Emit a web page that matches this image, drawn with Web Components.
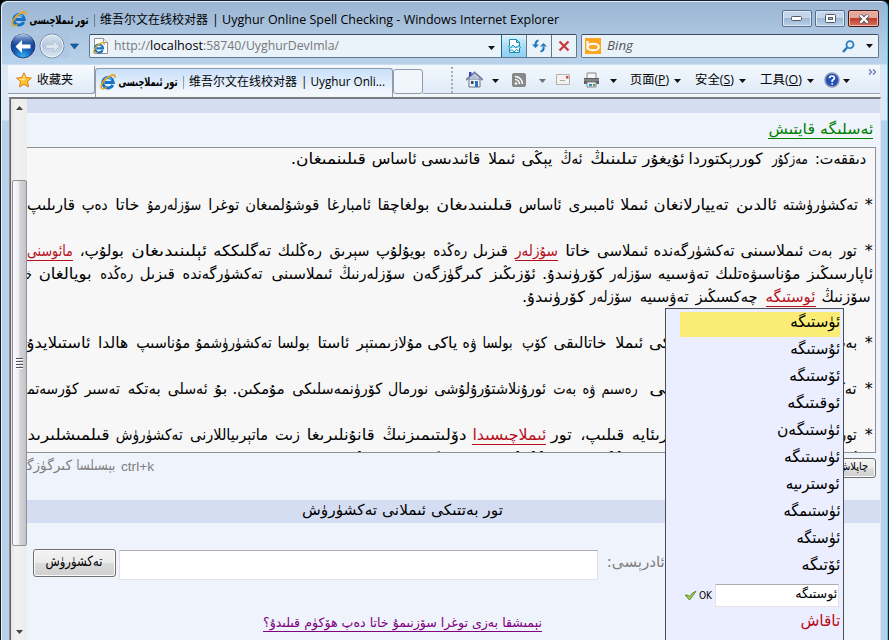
<!DOCTYPE html>
<html lang="ug">
<head>
<meta charset="utf-8">
<title>تور ئىملاچىسى</title>
<style>
html,body{margin:0;height:640px;overflow:hidden;background:#000}
</style>
</head>
<body>
<ie-window></ie-window>
<script>
const define=(n,c)=>customElements.define(n,c);
const mount=(el,html)=>{el.attachShadow({mode:'open'}).innerHTML=html;};

/* Text run that fills a given width; rtl runs are anchored right. */
define('fit-text',class extends HTMLElement{
  connectedCallback(){
    if(this.shadowRoot)return;
    const a=n=>this.getAttribute(n),w=+a('w'),rtl=this.hasAttribute('rtl'),u=a('u');
    mount(this,`<style>:host{display:block;flex:none;width:${w}px;white-space:nowrap;direction:${rtl?'rtl':'ltr'};
      ${u?`background:linear-gradient(currentColor,currentColor) 0 ${u}px/100% 1px no-repeat;`:''}}
      span{display:inline-block;transform-origin:${rtl?'right':'left'} center}</style><span><slot></slot></span>`);
    const s=this.shadowRoot.querySelector('span'),n=s.getBoundingClientRect().width;
    if(n)s.style.transform=`scaleX(${w/n})`;
  }
});

/* One right-to-left line. Each run is [right, left, text, underlined]. */
const run=(list,edge,under)=>{let x=edge;return list.map(([r,l,t,red])=>{
  const m=x-r;x=l;
  return `<fit-text rtl w="${r-l}" style="margin-right:${m}px${red?';color:#b8101c':''}" ${red?`u="${under}"`:''}>${t}</fit-text>`;}).join('');};

const J='\u200D';
const LINES=[
 [[866,815,'دىققەت:'],[808,772,'مەزكۇر'],[763,689,'كوررېكتوردا'],[685,643,'ئۇيغۇر'],[637,590,'تىلىنىڭ'],[582,560,'ئەڭ'],[552,521,'يېڭى'],[515,488,'ئىملا'],[480,421,'قائىدىسى'],[417,372,'ئاساس'],[366,291,'قىلىنمىغان.']],
 [],
 [[873,865,'*'],[858,783,'تەكشۈرۈشتە'],[777,736,'ئالدىن'],[729,654,'تەييارلانغان'],[648,620,'ئىملا'],[614,568,'ئامبىرى'],[562,519,'ئاساس'],[512,436,'قىلىنىدىغان'],[429,377,'بولغاچقا'],[371,327,'ئامبارغا'],[319,245,'قوشۇلمىغان'],[239,208,'توغرا'],[201,147,'سۆزلەرمۇ'],[139,115,'خاتا'],[108,82,'دەپ'],[75,27,'قارىلىپ']],
 [],
 [[873,865,'*'],[857,840,'تور'],[832,808,'بەت'],[803,740,'ئىملاسىنى'],[735,654,'تەكشۈرگەندە'],[648,597,'ئىملاسى'],[590,565,'خاتا'],[558,515,'سۇزلەر',1],[508,473,'قىزىل'],[467,433,'رەڭدە'],[426,376,'بويۇلۇپ'],[369,329,'سېرىق'],[322,278,'رەڭلىك'],[271,213,'تەگلىككە'],[207,131,'ئېلىنىدىغان'],[124,80,'بولۇپ،'],[73,27,'مائوسنى',1]],
 [[873,807,'ئاپارسىڭىز'],[800,715,'مۇناسىۋەتلىك'],[709,658,'تەۋسىيە'],[652,610,'سۆزلەر'],[604,542,'كۆرۈنىدۇ.'],[536,490,'ئۆزىڭىز'],[483,413,'كىرگۈزگەن'],[405,339,'سۆزلەرنىڭ'],[332,271,'ئىملاسىنى'],[263,183,'تەكشۈرگەندە'],[175,140,'قىزىل'],[133,100,'رەڭدە'],[92,39,'بويالغان'],[32,27,'خ'+J]],
 [[871,822,'سۆزنىڭ'],[816,766,'ئوستىگە',1],[758,696,'چەكسىڭىز'],[689,640,'تەۋسىيە'],[632,590,'سۆزلەر'],[585,522,'كۆرۈنىدۇ.']],
 [],
 [[873,865,'*'],[857,832,'بەت'],[826,649,'تېكىستىدىكى سۆزلەردىكى'],[643,615,'ئىملا'],[607,554,'خاتالىقى'],[547,522,'كۆپ'],[513,483,'بولسا'],[477,463,'ۋە'],[457,427,'ياكى'],[422,356,'مۇلازىمىتېر'],[349,317,'ئاستا'],[310,278,'بولسا'],[272,196,'تەكشۈرۈشمۇ'],[190,136,'مۇناسىپ'],[128,98,'ھالدا'],[91,27,'ئاستىلايدۇ']],
 [],
 [[873,865,'*'],[857,777,'تەكشۈرگەندە'],[770,649,'تور بەتلەردىكى'],[638,602,'رەسىم'],[596,583,'ۋە'],[576,553,'بەت'],[546,434,'ئورۇنلاشتۇرۇلۇشى'],[428,388,'نورمال'],[382,292,'كۆرۈنمەسلىكى'],[285,233,'مۇمكىن.'],[227,214,'بۇ'],[208,168,'ئەسلى'],[161,128,'بەتكە'],[120,85,'تەسىر'],[78,27,'كۆرسەتم'+J]],
 [],
 [[873,865,'*'],[857,840,'تور'],[832,672,'بەت قانۇنلىرىغا'],[668,632,'رىئايە'],[624,580,'قىلىپ،'],[572,551,'تور'],[546,472,'ئىملاچىسىدا',1],[466,382,'دۆلىتىمىزنىڭ'],[375,307,'قانۇنلىرىغا'],[300,275,'زىت'],[268,190,'ماتېرىياللارنى'],[183,116,'تەكشۈرۈش'],[109,27,'قىلمىشلىرىد'+J]],
 [[873,760,'ساقلىنىشىڭىزنى'],[753,640,'ئۈمىد قىلىمىز'],[632,470,'ئالدىن ئالالايدۇ'],[462,320,'تەكشۈرۈلىدۇ']]
];

define('ie-arrow',class extends HTMLElement{connectedCallback(){
  mount(this,`<style>:host{display:block;flex:none;width:7px;height:4px}svg{display:block}</style><svg width="7" height="4"><path d="M0 0h7L3.500 4z" fill="${this.getAttribute('c')||'#111'}"/></svg>`);}});

define('ie-logo',class extends HTMLElement{connectedCallback(){
  mount(this,`<style>:host{display:block;flex:none;width:16px;height:16px}svg{display:block}</style>
  <svg width="16" height="16" viewBox="0 0 16 16"><path d="M12.800 11A5.300 5.300 0 1 1 13.300 8.500H4.600" fill="none" stroke="#1473c8" stroke-width="3"/><path d="M11.500 5.400A4 4 0 0 0 4.300 6.500" fill="none" stroke="#55c1f3" stroke-width="1.200"/><path d="M1.600 14.600C-.5 11.500 4.500 4.500 10 1.900C13.500.2 15.700.8 14.700 3.800" fill="none" stroke="#e9a317" stroke-width="1.700"/><path d="M1.600 14.600C3 15.600 5 14.400 6.500 13.400" fill="none" stroke="#e9a317" stroke-width="1.300"/></svg>`);}});

const ICON={
 back:[96,32,`<defs><radialGradient id="b" cx=".5" cy=".95" r=".8"><stop offset="0" stop-color="#35b6f2"/><stop offset=".5" stop-color="#1457b4"/><stop offset="1" stop-color="#0d2f7c"/></radialGradient><linearGradient id="t" x2="0" y2="1"><stop offset="0" stop-color="#b9cff0"/><stop offset="1" stop-color="#4d7dc6" stop-opacity="0"/></linearGradient><linearGradient id="f" x2="0" y2="1"><stop offset="0" stop-color="#dbe6f2"/><stop offset=".5" stop-color="#b4c8de"/><stop offset="1" stop-color="#dfeaf5"/></linearGradient></defs>
  <path d="M14 3Q32 8 44 3H62V28H44Q32 24 14 29Z" fill="#a5bdd9" opacity=".35"/><circle cx="15" cy="16" r="12.500" fill="url(#b)" stroke="#e3edf8" stroke-width="1"/><circle cx="15" cy="16" r="12" fill="none" stroke="#263b69"/><path d="M4 15A11 11 0 0 1 26 15Q15 18 4 15" fill="url(#t)"/><path d="M7.500 16.500L14 10v4.500h8.500v4H14V23z" fill="#fff"/><circle cx="44" cy="16" r="12" fill="url(#f)" stroke="#758ba6"/><circle cx="44" cy="16" r="11" fill="none" stroke="#eef5fb"/><path d="M51.500 16.500L45.500 10.500v4H38v4h7.500v4z" fill="#dce6ef" stroke="#aabed3" stroke-width=".7"/><path d="M62.500 14h8l-4 5z" fill="#0b64ad" stroke="#174a7c" stroke-width=".7"/>`],
 page:[16,16,`<path d="M1.500.5h9l4 4v11h-13z" fill="#fff" stroke="#8c8f94"/><path d="M10.500.5v4h4" fill="#eee" stroke="#999"/>`],
 compat:[15,16,`<path d="M2.500 8V1.500h7l3 3V8M9.500 1.500v3h3M2.500 10v4.500h10V10" fill="#fff" stroke="#1a8ab5"/><path d="M1 8l2.500 2L6 7l3 3 2-2.500L14 10M3 13l2-1.500L7 14l2.500-2.500L12 13" fill="none" stroke="#1a9bc7"/>`],
 refresh:[15,15,`<path d="M6.500 1.500Q3.500 2 3.500 6M8.500 12.500Q12 12 11.500 8" fill="none" stroke="#2277bb" stroke-width="2.200"/><path d="M0 5.500h7L3.500 9zM8 7.500h7L11.500 4z" fill="#2277bb"/>`],
 stop:[12,12,`<path d="M1.500 1.500l9 9M10.500 1.500l-9 9" stroke="#c83c3c" stroke-width="2.300"/>`],
 bing:[16,16,`<path d="M0 0h16v16H0z" fill="#ffa51f"/><path d="M2.500 3v8.500" stroke="#fff" stroke-width="2"/><ellipse cx="8.200" cy="9" rx="5.600" ry="3.300" fill="none" stroke="#fff" stroke-width="2"/>`],
 search:[13,13,`<path d="M1 12l4.500-5" stroke="#2673b7" stroke-width="2.300"/><circle cx="8" cy="4.700" r="3.500" fill="#dbf0ff" stroke="#3080bf" stroke-width="1.800"/>`],
 star:[16,16,`<path d="M8 .8l2.200 4.700 5.200.6-3.900 3.500 1 5.300L8 12.300l-4.500 2.600 1-5.300L.6 6.100l5.200-.6z" fill="#ffc233" stroke="#d87d10"/><path d="M8 3v5L3 7" fill="none" stroke="#ffe9a0"/>`],
 home:[17,17,`<path d="M3 8h11v8H3z" fill="#eff1f5" stroke="#66708a"/><path d="M0 9L8.500 1.500 17 9" fill="none" stroke="#76809f" stroke-width="2"/><path d="M3 1h2.500v3L3 6z" fill="#3443c9"/><path d="M8 3.500L13 8H4z" fill="#b4bfd8"/><path d="M9 10h3v6H9z" fill="#2e72c6"/><path d="M5 10h2.500v3H5z" fill="#39445e"/>`],
 rss:[14,14,`<rect width="14" height="14" rx="2" fill="#888"/><circle cx="4" cy="10.500" r="1.300" fill="#fff"/><path d="M3 6.500A4.500 4.500 0 0 1 7.500 11M3 3.500A7.500 7.500 0 0 1 10.500 11" fill="none" stroke="#fff" stroke-width="1.500"/>`],
 mail:[15,11,`<path d="M.5.500h13v10H.5z" fill="#f4f2f1" stroke="#b8afae"/><path d="M10 2h2.500v2.500H10z" fill="#d54444"/><path d="M4 6.500h5" stroke="#aaa"/>`],
 print:[17,16,`<path d="M4 1h9v6H4z" fill="#f5f5f5" stroke="#888"/><path d="M1 6h15v6H1z" fill="#5c6066"/><path d="M1 8h15" stroke="#a4a8ae"/><path d="M4 10h9v5H4z" fill="#e7f0f5" stroke="#888"/><path d="M6 13h3" stroke="#2b8dbb" stroke-width="2"/><path d="M10 13h2" stroke="#45a150" stroke-width="2"/>`],
 help:[16,16,`<circle cx="8" cy="8" r="7" fill="#2350b5" stroke="#8d9bb5" stroke-width="1.500"/><path d="M5.500 6.300Q5.600 4 8 4t2.400 2.100Q10.400 7.400 8.200 8.600V10M8.200 11.200v1.600" fill="none" stroke="#fff" stroke-width="1.700"/>`],
 more:[9,6,`<path d="M1 .5L3.500 3 1 5.500M5 .5L7.500 3 5 5.500" fill="none" stroke="#6274b4" stroke-width="1.200"/>`],
 check:[13,11,`<path d="M1.200 5l3 .3 1.200 1.200Q8 2.500 12 1.200 9.500 5 5.500 10z" fill="#a5cf52" stroke="#5b8a22"/>`]
};
define('ie-icon',class extends HTMLElement{connectedCallback(){
  const [w,h,s]=ICON[this.getAttribute('n')];
  mount(this,`<style>:host{display:block;flex:none;width:${w}px;height:${h}px}svg{display:block}</style><svg width="${w}" height="${h}" viewBox="0 0 ${w} ${h}">${s}</svg>`);}});

define('ie-titlebar',class extends HTMLElement{connectedCallback(){
  mount(this,`<style>:host{display:flex;flex:none;height:30px;box-sizing:border-box;padding:0 9px 0 9px;align-items:flex-start}
  .t{display:flex;padding-top:9px;line-height:20px;height:20px}.ar{font-weight:bold;font-size:12px}
  .i{margin:10px 3px 0 0}.b{display:flex;gap:3px;margin:9px 0 0 auto}
  .b i{display:flex;box-sizing:border-box;width:30px;height:17px;border:1px solid #576f8f;border-radius:2px;box-shadow:inset 0 0 0 1px #dfeaf6;background:linear-gradient(#c4d6eb 45%,#9fb8d3 50%,#b9d0e8);align-items:center;justify-content:center}
  .b .x{width:31px;background:linear-gradient(#e5a99c 45%,#bd3d28 50%,#d77560);border-color:#471a1a;box-shadow:inset 0 0 0 1px #efb9ae}</style>
  <ie-logo class="i" style="margin-left:1px"></ie-logo><div class="t"><fit-text class="ar" rtl w="59">تور ئىملاچىسى</fit-text>
  <fit-text w="3" style="margin-left:4px">|</fit-text><fit-text w="108" style="margin-left:4px">维吾尔文在线校对器</fit-text><fit-text w="347" style="margin-left:4px">| Uyghur Online Spell Checking - Windows Internet Explorer</fit-text></div>
  <div class="b"><i><svg width="12" height="6"><rect x=".5" y=".5" width="10" height="4" rx="1" fill="#fff" stroke="#535866"/></svg></i><i><svg width="11" height="9"><rect x=".5" y=".5" width="10" height="8" rx="1" fill="#fff" stroke="#535866"/><rect x="3.500" y="3.500" width="4" height="2" fill="#a8bed7" stroke="#535866"/></svg></i><i class="x"><svg width="12" height="10"><path d="M2 1l8 8M10 1L2 9" stroke="#5b5b68" stroke-width="4.200"/><path d="M2.300 1.300l7.400 7.400M9.700 1.300L2.300 8.700" stroke="#fff" stroke-width="2.300"/></svg></i></div>`);}});

define('ie-navbar',class extends HTMLElement{connectedCallback(){
  mount(this,`<style>:host{display:flex;flex:none;height:34px;padding:0 9px 0 7px}
  .box{display:flex;box-sizing:border-box;height:24px;margin-top:3px;border:1px solid #62788f;border-top-color:#3c4c5c;border-radius:2px;background:#eaf2fa;align-items:center}
  .a{width:489px;margin-left:-15px}.s{width:298px;margin-left:4px}.nav{margin:-1px 0 0}
  .p{position:relative;margin-left:3px}.p ie-logo{position:absolute;left:0;top:4px;transform:scale(.75);transform-origin:0 0}
  .u{display:flex;margin-left:5px;color:#787878;line-height:20px}
  .c{display:flex;width:25px;height:22px;box-sizing:border-box;border-left:1px solid #62788f;align-items:center;justify-content:center}
  .c.h{background:linear-gradient(#dff3fc,#a9dcf5 50%,#8fd0f2);border-color:#1d6a97}</style>
  <ie-icon class="nav" n="back"></ie-icon>
  <div class="box a"><div class="p"><ie-icon n="page"></ie-icon><ie-logo></ie-logo></div><div class="u"><fit-text w="36">http://</fit-text><fit-text w="53" style="color:#000">localhost</fit-text><fit-text w="136">:58740/UyghurDevImla/</fit-text></div>
   <ie-arrow style="margin:3px 6px 0 auto"></ie-arrow><div class="c h"><ie-icon n="compat"></ie-icon></div><div class="c"><ie-icon n="refresh"></ie-icon></div><div class="c"><ie-icon n="stop"></ie-icon></div></div>
  <div class="box s"><ie-icon n="bing" style="margin-left:3px"></ie-icon><fit-text w="26" style="margin-left:6px;font-style:italic;color:#555">Bing</fit-text><ie-icon n="search" style="margin:0 11px 0 auto"></ie-icon><ie-arrow style="margin-right:5px"></ie-arrow></div>`);}});

define('ie-commandbar',class extends HTMLElement{connectedCallback(){
  const m=(w,t,k)=>`<fit-text w="${w}">${t}(<u>${k}</u>)</fit-text><ie-arrow style="margin:3px 14px 0 5px"></ie-arrow>`;
  mount(this,`<style>:host{display:flex;flex:none;box-sizing:border-box;height:32px;margin:0 8px 0 7px;border-top:1px solid #f4f9fe;background:linear-gradient(#f3f8fd,#dfeaf7 88%,#f2f7fc 90%)}
  .f{display:flex;box-sizing:border-box;width:87px;height:28px;border:1px solid #8f9bab;border-width:0 1px 1px 0;border-radius:0 0 3px 0;padding-left:8px;align-items:center;background:linear-gradient(#f7fbfe,#dfeaf7)}
  .t{display:flex;box-sizing:border-box;width:298px;height:29px;margin-top:2px;border:1px solid #8f9bab;border-bottom:0;border-radius:3px 3px 0 0;padding:0 0 3px 4px;align-items:center;background:linear-gradient(#c9e0fb,#f2f7fc 85%)}
  .n{box-sizing:border-box;width:30px;height:25px;margin-top:3px;border:1px solid #8f9bab;border-radius:3px;background:#f0f6fc}
  .c{display:flex;flex:1;height:27px;align-items:center;border-bottom:1px solid #9aa6b5;padding-left:28px;line-height:20px}
  .d{height:26px;border-left:2px dotted #a5acb5;margin-right:13px}.ar{font-weight:bold;font-size:12px}</style>
  <div class="f"><ie-icon n="star"></ie-icon><fit-text w="36" style="margin-left:5px">收藏夹</fit-text></div>
  <div class="t"><ie-logo></ie-logo><fit-text class="ar" rtl w="59" style="margin-left:3px">تور ئىملاچىسى</fit-text><fit-text w="3" style="margin-left:4px">|</fit-text><fit-text w="108" style="margin-left:4px">维吾尔文在线校对器</fit-text><fit-text w="84" style="margin-left:4px">| Uyghur Onli...</fit-text></div><div class="n"></div>
  <div class="c"><div class="d"></div><ie-icon n="home"></ie-icon><ie-arrow style="margin:3px 13px 0 9px"></ie-arrow><ie-icon n="rss"></ie-icon><ie-arrow c="#69727c" style="margin:3px 10px 0 13px"></ie-arrow><ie-icon n="mail"></ie-icon><ie-icon n="print" style="margin-left:12px"></ie-icon><ie-arrow style="margin:3px 13px 0 10px"></ie-arrow>
  ${m(39,'页面','P')}${m(39,'安全','S')}${m(42,'工具','O')}<ie-icon n="help" style="margin-left:-4px"></ie-icon><ie-arrow style="margin:3px 0 0 3px"></ie-arrow><ie-icon n="more" style="margin:-15px 3px 0 auto"></ie-icon></div>`);}});

define('ie-scrollbar',class extends HTMLElement{connectedCallback(){
  mount(this,`<style>:host{display:flex;flex-direction:column;flex:none;width:16px;align-items:center;background:linear-gradient(90deg,#e6e6e6,#f1f1f1 30%,#ececec)}
  .th{display:flex;flex:none;flex-direction:column;gap:2px;align-items:center;justify-content:center;box-sizing:border-box;width:15px;height:366px;margin-top:70px;border:1px solid #909096;border-radius:2px;background:linear-gradient(90deg,#fafafa,#ededf0 45%,#d3d4d8 52%,#c3c4c9)}
  .th i{width:7px;height:1px;background:#4f535b;box-shadow:0 1px #fff}.up{margin-top:7px}.dn{margin-top:84px}svg{display:block;flex:none}</style>
  <svg class="up" width="7" height="4"><path d="M0 4h7L3.500 0z" fill="#444"/></svg><div class="th"><i></i><i></i><i></i><i></i></div><svg class="dn" width="7" height="4"><path d="M0 0h7L3.500 4z" fill="#444"/></svg>`);}});

define('spell-text',class extends HTMLElement{connectedCallback(){
  mount(this,`<style>:host{display:block;flex:none;box-sizing:border-box;width:849px;height:306px;overflow:hidden;border:1px solid #919194;border-left:0;background:#f7f7f7;font-size:15.500px;color:#000}
  .l{display:flex;direction:rtl;height:23px;line-height:23px;margin-right:2px;overflow:visible}</style>
  ${LINES.map(l=>`<div class="l">${run(l,873,20)}</div>`).join('')}`);}});

define('ug-button',class extends HTMLElement{connectedCallback(){
  mount(this,`<style>:host{display:flex;flex:none;box-sizing:border-box;border:1px solid #707070;border-radius:3px;background:linear-gradient(#f3f3f3,#ebebeb 48%,#dcdcdc 50%,#cfcfcf);box-shadow:inset 0 0 0 1px #fafafa;color:#000}</style><slot></slot>`);}});

const WORDS=[['ئۈستىگە',50],['ئۇستىگە',50],['ئۆستىگە',51],['ئوقىتىگە',53],['ئۈستىگەن',63],['ئۈسىتىگە',56],['ئوسترىيە',54],['ئۈستىمگە',57],['ئۈستگە',44],['ئۆتىگە',39]];
define('suggest-menu',class extends HTMLElement{connectedCallback(){
  mount(this,`<style>:host{display:block;box-sizing:border-box;width:179px;height:340px;border:1px solid #4b4d57;padding:3px 3px 0 14px;background:#ebeefe;font-size:16px;color:#000}
  .w{display:flex;direction:rtl;height:25px;margin-bottom:2px;line-height:20px}.w.on{background:#fbec76}
  .e{display:flex;height:23px;margin-top:4px;padding-left:4px;align-items:center;font-size:11px}
  .in{display:flex;direction:rtl;box-sizing:border-box;width:124px;height:23px;margin-left:3px;border:1px solid #e2e3ea;border-top-color:#abadb3;background:#fff;padding-right:1px;line-height:18px;font-size:13px}
  .d{display:flex;direction:rtl;color:#b8101c;line-height:22px;margin-top:3px}</style>
  ${WORDS.map(([t,w],i)=>`<div class="w${i?'':' on'}"><fit-text rtl w="${w}">${t}</fit-text></div>`).join('')}
  <div class="e"><ie-icon n="check"></ie-icon><fit-text w="13" style="margin-left:2px">OK</fit-text><div class="in"><fit-text rtl w="42">ئوستىگە</fit-text></div></div>
  <div class="d"><fit-text rtl w="40">تاقاش</fit-text></div>`);}});

define('spell-page',class extends HTMLElement{connectedCallback(){
  mount(this,`<style>:host{display:flex;flex-direction:column;flex:none;position:relative;width:853px;height:541px;overflow:hidden;background:#eff3fc;font-size:15px;color:#000}
  .r{display:flex;direction:rtl;flex:none}.band{background:#d5ddf2}.top{height:14px}
  .back{height:34px;padding-right:7px;line-height:32px;color:#008000}
  .hint{height:47px;padding-right:4px;color:#808080;line-height:24px;font-size:14px}
  .h{height:23px;line-height:20px;padding-right:377px}
  .form{height:98px;padding-top:26px;box-sizing:border-box;align-items:flex-start}
  .in{box-sizing:border-box;width:479px;height:30px;border:1px solid #dfe2ea;border-top-color:#abadb3;background:#fff;margin-right:9px}
  suggest-menu{position:absolute;left:638px;top:209px}</style>
  <div class="r band top"></div>
  <div class="r back"><fit-text rtl w="105" u="25">ئەسلىگە قايتىش</fit-text></div>
  <spell-text></spell-text>
  <div class="r hint"><ug-button style="width:52px;height:20px;margin-top:5px;padding-right:7px;line-height:15px;font-size:11px"><fit-text rtl w="30">چاپلاش</fit-text></ug-button>
   <fit-text w="33" style="margin-right:670px;font-family:'Liberation Sans',sans-serif;font-size:13px;line-height:27px">ctrl+k</fit-text><fit-text rtl w="39" style="margin-right:6px">بېسىلسا</fit-text><fit-text rtl w="45" style="margin-right:4px">كىرگۈزگ${J}</fit-text></div>
  <div class="r band h"><fit-text rtl w="201">تور بەتتىكى ئىملانى تەكشۈرۈش</fit-text></div>
  <div class="r form"><fit-text rtl w="58" style="margin-right:215px;color:#808080;line-height:26px">ئادرېسى:</fit-text><div class="in" style="margin-top:1px"></div><ug-button style="width:83px;height:28px;margin-right:3px;padding-right:13px;line-height:22px;font-size:14px"><fit-text rtl w="57">تەكشۈرۈش</fit-text></ug-button></div>
  <div class="r" style="padding-right:338px;color:#800080;font-size:13px;line-height:20px;margin-top:-8px"><fit-text rtl w="279" u="18">نېمىشقا بەزى توغرا سۆزنىمۇ خاتا دەپ ھۆكۈم قىلىدۇ؟</fit-text></div>
  <suggest-menu></suggest-menu>`);}});

define('ie-window',class extends HTMLElement{connectedCallback(){
  mount(this,`<style>:host{display:flex;flex-direction:column;box-sizing:border-box;width:889px;height:640px;overflow:hidden;border:1px solid #16202b;border-bottom:0;border-radius:7px 7px 0 0;box-shadow:inset -1px 0 #4fc4e6,inset 1px 1px #e5f1fa;
   background:linear-gradient(#9ab4d2,#b3cce6 45px,#b9d2eb 63px,#dce8f5 64px,#dce8f5 119px,#b9d1ea 120px);font:12px/20px "Open Sans","Noto Sans CJK SC","DejaVu Sans",sans-serif;color:#000}
  .v{display:flex;flex:none;box-sizing:border-box;width:872px;height:544px;margin-left:8px;border:1px solid #8b8e94;border-right-color:#e4e8ed;border-top:2px solid #777b80;box-shadow:inset 1px 0 #606368;padding-left:1px}
  .v{font-family:"DejaVu Sans",sans-serif}</style>
  <ie-titlebar></ie-titlebar><ie-navbar></ie-navbar><ie-commandbar></ie-commandbar><div class="v"><ie-scrollbar></ie-scrollbar><spell-page></spell-page></div>`);}});
</script>
</body>
</html>
